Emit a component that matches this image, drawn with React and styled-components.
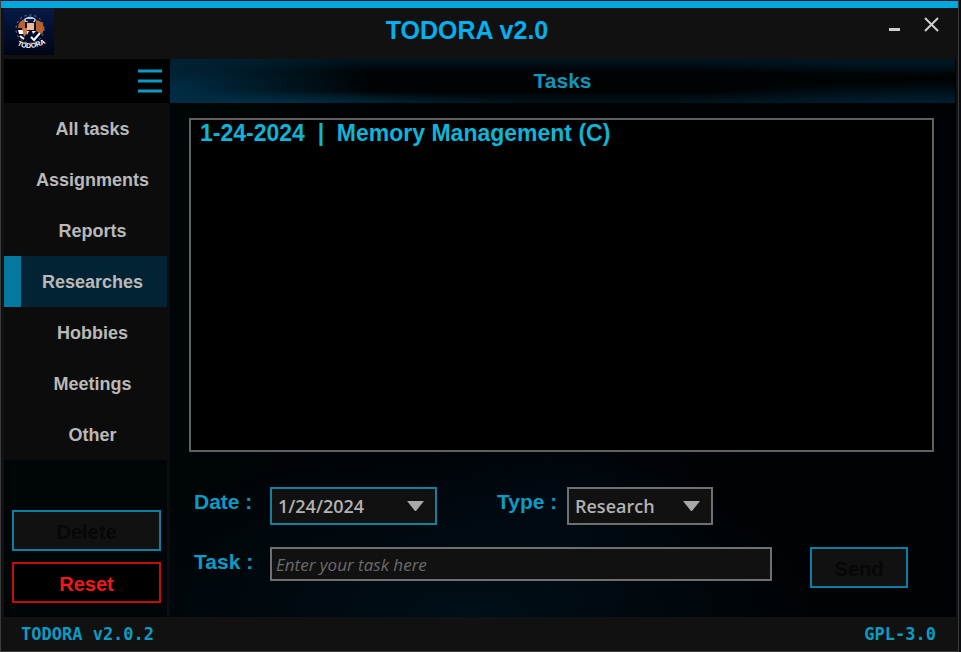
import React, { useState } from "react";
import styled, { createGlobalStyle } from "styled-components";

const sans = '"Liberation Sans", Arial, sans-serif';
const humanist = '"Open Sans", "Noto Sans", sans-serif';

const GlobalStyle = createGlobalStyle`
  *, *::before, *::after { box-sizing: border-box; }
  body { margin: 0; background: #0a0c12; font-family: ${sans}; }
  button, input, select { font: inherit; margin: 0; }
`;

const Window = styled.div`
  display: flex;
  flex-direction: column;
  min-height: 100vh;
  margin-right: 2px;
  padding: 0 2px 0 3px;
  border: 1px solid #3c3c3c;
  border-top: 0;
  background: #111111;
  box-shadow: inset 0 1px #08122a, inset 0 8px #00a9dc;
`;

const TitleBar = styled.header`
  display: grid;
  grid-template-columns: 100px 1fr 126px;
  align-items: start;
  height: 59px;
  padding-top: 9px;
`;

const Logo = styled.svg`
  display: block;
  width: 50px;
  height: 46px;
`;

const AppTitle = styled.h1`
  margin: 0;
  padding-top: 6px;
  font-size: 25px;
  line-height: 30px;
  text-align: center;
  color: #00b0f0;
`;

const WindowControls = styled.div`
  display: flex;
  justify-content: flex-end;
  gap: 12px;
  padding: 3px 11px 0 0;
`;

const ControlButton = styled.button`
  display: grid;
  place-items: center;
  width: 26px;
  height: 26px;
  padding: 0;
  border: 0;
  background: transparent;
  color: #cfcfcf;
`;

const Body = styled.div`
  display: flex;
  flex: 1;
`;

const Sidebar = styled.aside`
  display: flex;
  flex-direction: column;
  flex: 0 0 166px;
  border-right: 3px solid #0b0c0d;
  background: #000508;
`;

const MenuBar = styled.div`
  display: flex;
  justify-content: flex-end;
  height: 44px;
  margin-right: -3px;
  padding: 6px 4px 0 0;
  background: #000;
`;

const MenuButton = styled.button`
  display: grid;
  place-items: center;
  width: 32px;
  height: 32px;
  padding: 0;
  border: 0;
  background: transparent;
  color: #0b9cc4;
`;

const Nav = styled.nav`
  display: flex;
  flex-direction: column;
  background: #0c0c0c;
`;

const NavItem = styled.button`
  height: 51px;
  padding: 0 3px 0 ${(p) => (p.$active ? 0 : 17)}px;
  border: 0;
  border-left: ${(p) => (p.$active ? "17px solid #06789f" : "0")};
  background: ${(p) => (p.$active ? "#022334" : "transparent")};
  color: #b9b9b9;
  font-size: 18px;
  font-weight: bold;
  line-height: 22px;
  text-align: center;
`;

const SideActions = styled.div`
  display: flex;
  flex-direction: column;
  gap: 11px;
  margin-top: auto;
  padding: 0 6px 14px 8px;
`;

const ActionButton = styled.button`
  height: 41px;
  padding: 3px 0 0;
  border: 2px solid ${(p) => (p.$danger ? "#c40c0c" : "#0b7ea3")};
  background: ${(p) => (p.$danger ? "#000" : "#111")};
  color: ${(p) => (p.$danger ? "#f01818" : "#070707")};
  font-size: 20px;
  font-weight: bold;
  line-height: 24px;
`;

const SendButton = styled(ActionButton)`
  flex: 0 0 98px;
`;

const Main = styled.main`
  display: flex;
  flex: 1;
  flex-direction: column;
  min-width: 0;
  background:
    radial-gradient(ellipse 45% 32% at 38% 100%, #000f18, transparent),
    radial-gradient(ellipse 20% 20% at 50% 80%, #00070f, transparent),
    linear-gradient(90deg, #000508, #000204 50%, #000306);
`;

const Banner = styled.h2`
  height: 44px;
  margin: 0 1px 0 0;
  color: #1295bd;
  font-size: 21px;
  line-height: 44px;
  text-align: center;
  background:
    radial-gradient(ellipse 26% 150% at 0% 70%, #002d45, transparent),
    radial-gradient(ellipse 36% 30% at 8% 100%, #003045, transparent),
    radial-gradient(ellipse 32% 50% at 96% 100%, #001e30, transparent),
    radial-gradient(ellipse 32% 40% at 96% 0%, #001824, transparent),
    linear-gradient(#001620, #000304 30%, #000304 75%, #00141d);
`;

const Content = styled.div`
  display: flex;
  flex: 1;
  flex-direction: column;
  padding: 15px 22px 29px 19px;
`;

const TaskList = styled.ul`
  flex: 1;
  min-height: 334px;
  margin: 0 0 35px;
  padding: 0 9px;
  border: 2px solid #606060;
  background: #000;
  list-style: none;
`;

const TaskItem = styled.li`
  color: #0db5d8;
  font-size: 23px;
  font-weight: bold;
  line-height: 26px;
  white-space: pre;
`;

const FormRow = styled.div`
  display: flex;
  align-items: flex-start;
  height: 41px;
  margin-bottom: ${(p) => (p.$last ? 0 : 19)}px;
  padding-right: 26px;
`;

const Label = styled.label`
  flex: 0 0 ${(p) => p.$width}px;
  padding: 0 0 0 5px;
  color: #0b9cc4;
  font-size: 21px;
  font-weight: bold;
  line-height: 30px;
  white-space: nowrap;
`;

const SelectBox = styled.div`
  display: grid;
  flex: 0 0 ${(p) => p.$width}px;
  margin-right: 55px;
  align-items: center;

  > * { grid-area: 1 / 1; }
  > svg { justify-self: end; margin-right: 13px; pointer-events: none; }
`;

const Select = styled.select`
  width: 100%;
  height: 38px;
  padding: 0 32px 0 6px;
  border: 2px solid ${(p) => (p.$focused ? "#13809d" : "#707070")};
  border-radius: 0;
  outline: 0;
  appearance: none;
  background: #111;
  color: #b2b2b2;
  font-family: ${humanist};
  font-size: 18px;
  font-weight: 600;
`;

const TaskInput = styled.input`
  flex: 1;
  min-width: 0;
  height: 34px;
  margin: 0 38px 0 0;
  padding: 0 4px;
  border: 2px solid #707070;
  border-radius: 0;
  outline: 0;
  background: #111;
  color: #b2b2b2;
  font-family: ${humanist};
  font-size: 17px;

  &::placeholder { color: #6c6c6c; font-style: italic; opacity: 1; }
`;

const Footer = styled.footer`
  display: flex;
  justify-content: space-between;
  height: 34px;
  padding: 0 20px 0 17px;
  color: #0b9cc4;
  font: bold 17px/34px "DejaVu Sans Mono", monospace;
`;

const categories = ["All tasks", "Assignments", "Reports", "Researches", "Hobbies", "Meetings", "Other"];

function BrandMark() {
  return (
    <Logo viewBox="0 0 50 46" role="img" aria-label="Todora">
      <defs>
        <linearGradient id="night" x2="0" y2="1">
          <stop stopColor="#071a46" />
          <stop offset=".5" stopColor="#030e2e" />
          <stop offset="1" stopColor="#010515" />
        </linearGradient>
        <path id="arc" d="M13 36 Q26 43 42 34" />
      </defs>
      <path fill="url(#night)" d="M0 0h50v46H0z" />
      <circle cx="26" cy="20" r="14" fill="none" stroke="#8a8795" strokeWidth="1" strokeDasharray="2 3" />
      <path d="M14 19q0-7 7-9v9z" fill="#b9602f" />
      <path d="M32 11q8 1 8 9l-2 5-6-3z" fill="#b9602f" />
      <path d="M23 14h7v7h-7z" fill="#f0b790" />
      <path d="M20 10q6-5 12 0l-1 3H21z" fill="#a9cde8" />
      <path d="M22 11h8M24 13h5" stroke="#061231" strokeWidth="2" />
      <path d="M14 21h6v4h-5zM22 22h3l-2 4zM28 22h4l-3 3z" fill="#fff" />
      <path d="M18 19h5v5l-3 4z" fill="#d17a48" />
      <path d="M16 27l4 3M27 28l3 3 6-7" fill="none" stroke="#fff" strokeWidth="2" />
      <text fill="#fff" fontFamily="Liberation Sans, sans-serif" fontSize="7" fontWeight="bold">
        <textPath href="#arc">TODORA</textPath>
      </text>
    </Logo>
  );
}

function Caret() {
  return (
    <svg width="17" height="10" viewBox="0 0 17 10" aria-hidden="true">
      <path d="M0 0h17L9 10H8z" fill="#a8a8a8" />
    </svg>
  );
}

export default function App() {
  const [active, setActive] = useState("Researches");
  return (
    <>
      <GlobalStyle />
      <Window>
        <TitleBar>
          <BrandMark />
          <AppTitle>TODORA v2.0</AppTitle>
          <WindowControls>
            <ControlButton aria-label="Minimize">
              <svg width="26" height="26" viewBox="0 0 26 26"><path d="M8 17.5h11" stroke="currentColor" strokeWidth="3" /></svg>
            </ControlButton>
            <ControlButton aria-label="Close">
              <svg width="26" height="26" viewBox="0 0 26 26"><path d="M6 6l13 13M19 6L6 19" stroke="currentColor" strokeWidth="2" /></svg>
            </ControlButton>
          </WindowControls>
        </TitleBar>
        <Body>
          <Sidebar>
            <MenuBar>
              <MenuButton aria-label="Menu">
                <svg width="24" height="24" viewBox="0 0 24 24"><path d="M0 2h24M0 12h24M0 22h24" stroke="currentColor" strokeWidth="3" /></svg>
              </MenuButton>
            </MenuBar>
            <Nav>
              {categories.map((name) => (
                <NavItem key={name} $active={name === active} onClick={() => setActive(name)}>{name}</NavItem>
              ))}
            </Nav>
            <SideActions>
              <ActionButton disabled>Delete</ActionButton>
              <ActionButton $danger>Reset</ActionButton>
            </SideActions>
          </Sidebar>
          <Main>
            <Banner>Tasks</Banner>
            <Content>
              <TaskList>
                <TaskItem>1-24-2024  |  Memory Management (C)</TaskItem>
              </TaskList>
              <FormRow>
                <Label htmlFor="date" $width={81}>Date :</Label>
                <SelectBox $width={167}>
                  <Select id="date" $focused><option>1/24/2024</option></Select>
                  <Caret />
                </SelectBox>
                <Label htmlFor="type" $width={75}>Type :</Label>
                <SelectBox $width={146}>
                  <Select id="type"><option>Research</option></Select>
                  <Caret />
                </SelectBox>
              </FormRow>
              <FormRow $last>
                <Label htmlFor="task" $width={81}>Task :</Label>
                <TaskInput id="task" placeholder="Enter your task here" />
                <SendButton disabled>Send</SendButton>
              </FormRow>
            </Content>
          </Main>
        </Body>
        <Footer>
          <span>TODORA v2.0.2</span>
          <span>GPL-3.0</span>
        </Footer>
      </Window>
    </>
  );
}
